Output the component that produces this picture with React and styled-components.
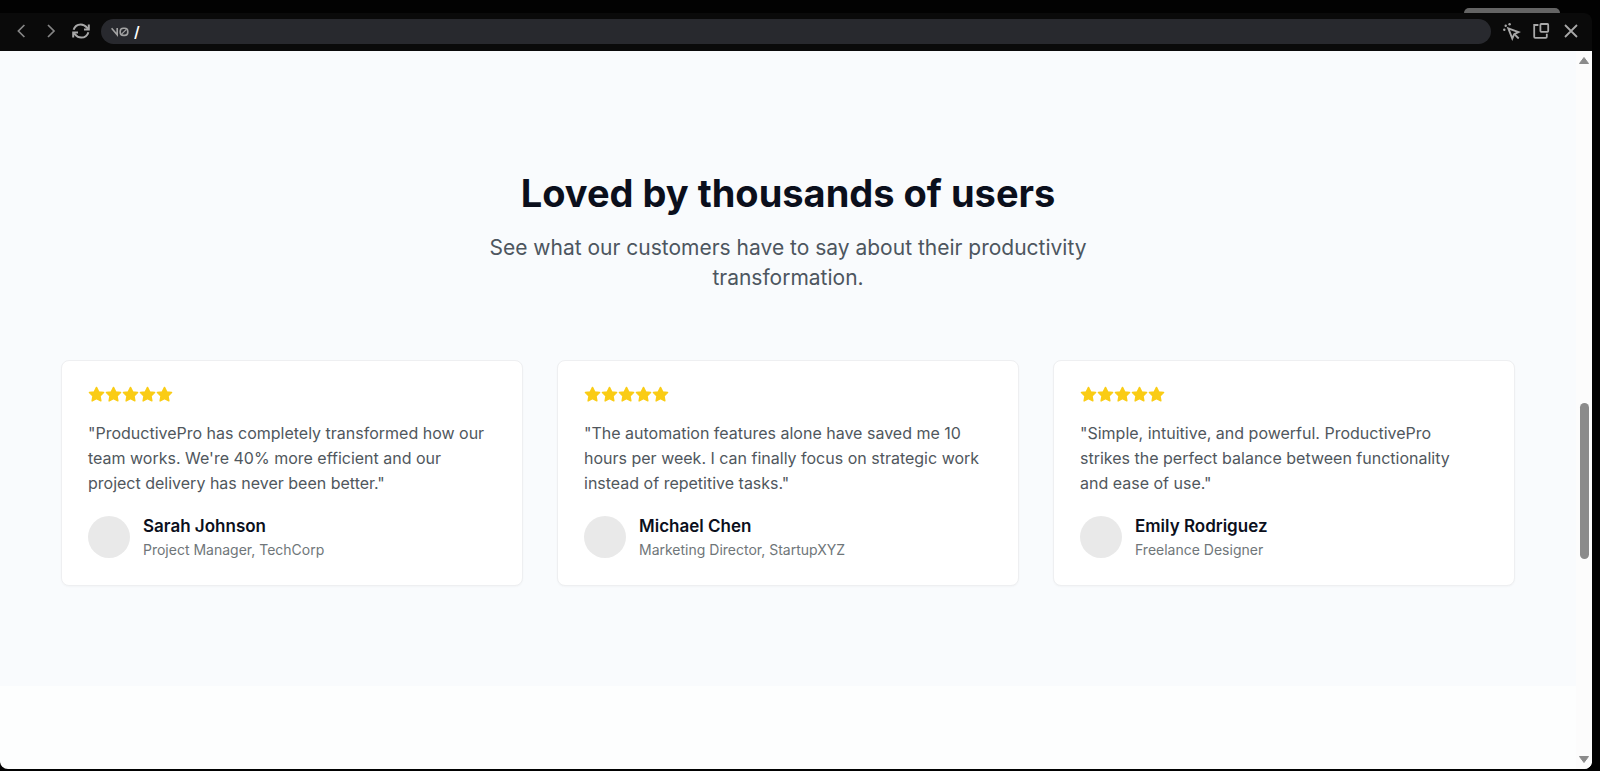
import React, { useState } from 'react';
import styled, { createGlobalStyle } from 'styled-components';

const testimonials = [
  {
    name: 'Sarah Johnson',
    role: 'Project Manager, TechCorp',
    quote:
      "ProductivePro has completely transformed how our team works. We're 40% more efficient and our project delivery has never been better.",
  },
  {
    name: 'Michael Chen',
    role: 'Marketing Director, StartupXYZ',
    quote:
      'The automation features alone have saved me 10 hours per week. I can finally focus on strategic work instead of repetitive tasks.',
  },
  {
    name: 'Emily Rodriguez',
    role: 'Freelance Designer',
    quote:
      'Simple, intuitive, and powerful. ProductivePro\nstrikes the perfect balance between functionality\nand ease of use.',
  },
];

const ChevronIcon = ({ flip }) => (
  <svg width="20" height="20" viewBox="0 0 20 20" fill="none" stroke="currentColor" strokeWidth="1.7">
    <path d={flip ? 'M7 4l6 6-6 6' : 'M13.4 4l-6 6 6 6'} />
  </svg>
);

const RefreshIcon = () => (
  <svg width="20" height="20" viewBox="0 0 20 20" fill="none" stroke="currentColor" strokeWidth="2">
    <path d="M2.6 8.8c1-3.400 3.800-5.400 7.200-5.400 2.600 0 4.600 1.200 6.200 3.200l1 1.400" />
    <path d="M17.800 3.600v4.800h-4.800" />
    <path d="M17.400 11.200c-1 3.400-3.800 5.400-7.200 5.400-2.600 0-4.600-1.200-6.200-3.200l-1-1.400" />
    <path d="M2.200 16.400v-4.800h4.800" />
  </svg>
);

const SelectIcon = () => (
  <svg width="20" height="20" viewBox="0 0 20 20" fill="none" stroke="currentColor" strokeWidth="1.9">
    <path d="M7.3 7.3l10.2 3.9-4.3 2-1.900 4.300z" />
    <path d="M13.4 13.2l4.300 4.300" />
    <g fill="currentColor" stroke="none">
      <circle cx="8.6" cy="3.300" r="1.200" />
      <circle cx="4.700" cy="4.700" r="1.200" />
      <circle cx="3.300" cy="8.700" r="1.200" />
    </g>
  </svg>
);

const PopOutIcon = () => (
  <svg width="20" height="20" viewBox="0 0 20 20" fill="none" stroke="currentColor" strokeWidth="1.800">
    <path d="M7.400 4H3.200v11.800q0 1 1 1h10.600q1 0 1-1V12.800" />
    <rect x="9.400" y="3" width="7.800" height="7.800" rx="0.800" />
  </svg>
);

const CloseIcon = () => (
  <svg width="20" height="20" viewBox="0 0 20 20" fill="none" stroke="currentColor" strokeWidth="1.800">
    <path d="M4 4l12 12M16 4L4 16" />
  </svg>
);

const Logo = () => (
  <svg width="18" height="10" viewBox="0 0 18 10" fill="none" stroke="currentColor" strokeWidth="1.600">
    <path d="M0.600 1.200l5.600 6.600V1" />
    <rect x="9.200" y="1.200" width="7.600" height="7.200" rx="3.200" />
    <path d="M10.600 7.200l4.800-4.800" strokeWidth="1.200" />
  </svg>
);

const StarIcon = () => (
  <svg width="17" height="17" viewBox="0 0 24 24" fill="currentColor" stroke="currentColor" strokeWidth="2" strokeLinejoin="round">
    <path d="M12 2l3.090 6.260L22 9.270l-5 4.870 1.180 6.880L12 17.770l-6.180 3.250L7 14.140 2 9.270l6.910-1.010z" />
  </svg>
);

const TestimonialCard = ({ testimonial }) => (
  <Card>
    <Stars role="img" aria-label="5 out of 5 stars">
      {[1, 2, 3, 4, 5].map((star) => (
        <StarIcon key={star} />
      ))}
    </Stars>
    <Quote>{`"${testimonial.quote}"`}</Quote>
    <Author>
      <Avatar />
      <div>
        <Name>{testimonial.name}</Name>
        <Role>{testimonial.role}</Role>
      </div>
    </Author>
  </Card>
);

const App = () => {
  const [path, setPath] = useState('/');

  return (
    <>
      <GlobalStyle />
      <Screen>
        <Backdrop>
          <BackdropTab />
        </Backdrop>
        <Preview>
          <Toolbar>
            <IconButton aria-label="Back" $dim><ChevronIcon /></IconButton>
            <IconButton aria-label="Forward" $dim><ChevronIcon flip /></IconButton>
            <IconButton aria-label="Refresh"><RefreshIcon /></IconButton>
            <AddressBar>
              <Logo />
              <AddressInput
                aria-label="Path"
                value={path}
                onChange={(e) => setPath(e.target.value)}
              />
            </AddressBar>
            <IconButton aria-label="Select element"><SelectIcon /></IconButton>
            <IconButton aria-label="Open in new window"><PopOutIcon /></IconButton>
            <IconButton aria-label="Close"><CloseIcon /></IconButton>
          </Toolbar>
          <Viewport>
            <Page>
              <Section>
                <Title>Loved by thousands of users</Title>
                <Subtitle>
                  See what our customers have to say about their productivity transformation.
                </Subtitle>
                <Grid>
                  {testimonials.map((testimonial) => (
                    <TestimonialCard key={testimonial.name} testimonial={testimonial} />
                  ))}
                </Grid>
              </Section>
            </Page>
            <Scrollbar aria-hidden="true">
              <Arrow viewBox="0 0 12 9"><path d="M6 1.500L10.500 7.500H1.500z" /></Arrow>
              <TrackSpace $grow={334} />
              <Thumb />
              <TrackSpace $grow={194} />
              <Arrow viewBox="0 0 12 9"><path d="M6 7.500L10.500 1.500H1.500z" /></Arrow>
            </Scrollbar>
          </Viewport>
        </Preview>
      </Screen>
    </>
  );
};

const GlobalStyle = createGlobalStyle`
  * {
    box-sizing: border-box;
  }

  body {
    margin: 0;
    background: #000000;
    font-family: Inter, 'Liberation Sans', sans-serif;
  }
`;

const Screen = styled.div`
  display: flex;
  flex-direction: column;
  height: 100vh;
  padding: 0 8px 2px 0;
  overflow: hidden;
  background: #020202;
`;

const Backdrop = styled.div`
  display: flex;
  justify-content: flex-end;
  align-items: flex-end;
  height: 13px;
  flex-shrink: 0;
  padding-right: 32px;
`;

const BackdropTab = styled.div`
  width: 96px;
  height: 5px;
  border-radius: 5px 5px 0 0;
  background: #646464;
`;

const Preview = styled.div`
  display: flex;
  flex-direction: column;
  flex: 1;
  min-height: 0;
  border-radius: 0 8px 8px 8px;
  overflow: hidden;
  background: #0a0a0a;
`;

const Toolbar = styled.header`
  display: flex;
  align-items: center;
  gap: 10px;
  height: 38px;
  flex-shrink: 0;
  padding: 0 11px 1px;
`;

const IconButton = styled.button`
  display: flex;
  align-items: flex-start;
  justify-content: center;
  width: 20px;
  height: 21px;
  padding: 0;
  border: none;
  background: none;
  color: ${(props) => (props.$dim ? '#858585' : '#a8a8a8')};
  cursor: pointer;
`;

const AddressBar = styled.label`
  display: flex;
  align-items: center;
  gap: 5px;
  flex: 1;
  height: 25px;
  padding: 0 10px;
  border-radius: 13px;
  background: #28292e;
  color: #a3a3a3;
`;

const AddressInput = styled.input`
  flex: 1;
  min-width: 0;
  padding: 0;
  border: none;
  outline: none;
  background: none;
  color: #ffffff;
  font-family: inherit;
  font-size: 15px;
  font-weight: 600;
  line-height: 20px;
`;

const Viewport = styled.div`
  display: flex;
  flex: 1;
  min-height: 0;
  background: #fdfefe;
`;

const Page = styled.main`
  flex: 1;
  min-width: 0;
  overflow: hidden;
`;

const Section = styled.section`
  padding: 119px 61px 100px;
  background: #f9fbfd;
  text-align: center;
`;

const Title = styled.h2`
  margin: 0 0 17px;
  color: #0b0f1c;
  font-size: 38px;
  font-weight: 700;
  line-height: 46px;
`;

const Subtitle = styled.p`
  max-width: 620px;
  margin: 0 auto 67px;
  color: #4d565f;
  font-size: 21px;
  line-height: 30px;
`;

const Grid = styled.div`
  display: grid;
  grid-template-columns: repeat(3, 1fr);
  gap: 34px;
  text-align: left;
`;

const Card = styled.article`
  padding: 25px 26px;
  border: 1px solid #eeeff1;
  border-radius: 8px;
  background: #ffffff;
  box-shadow: 0 1px 2px rgba(0, 0, 0, 0.03);
`;

const Stars = styled.div`
  display: flex;
  margin-bottom: 18px;
  color: #facc15;
`;

const Quote = styled.p`
  margin: 0 0 17px;
  color: #50575d;
  font-size: 16px;
  line-height: 25px;
  white-space: pre-line;
`;

const Author = styled.div`
  display: flex;
  align-items: center;
  gap: 13px;
`;

const Avatar = styled.div`
  width: 42px;
  height: 42px;
  border-radius: 50%;
  background: #e9e9e9;
`;

const Name = styled.div`
  color: #0b0f1c;
  font-size: 17px;
  font-weight: 600;
  line-height: 27px;
`;

const Role = styled.div`
  color: #6f7679;
  font-size: 14px;
  line-height: 20px;
`;

const Scrollbar = styled.div`
  display: flex;
  flex-direction: column;
  align-items: center;
  width: 16px;
  padding: 5px 0;
  background: #fcfcfc;
`;

const Arrow = styled.svg`
  width: 12px;
  height: 9px;
  fill: #8b8b8b;
  stroke: #8b8b8b;
  stroke-linejoin: round;
`;

const TrackSpace = styled.div`
  flex: ${(props) => props.$grow};
`;

const Thumb = styled.div`
  width: 9px;
  height: 156px;
  border-radius: 5px;
  background: #8b8b8b;
`;

export default App;
